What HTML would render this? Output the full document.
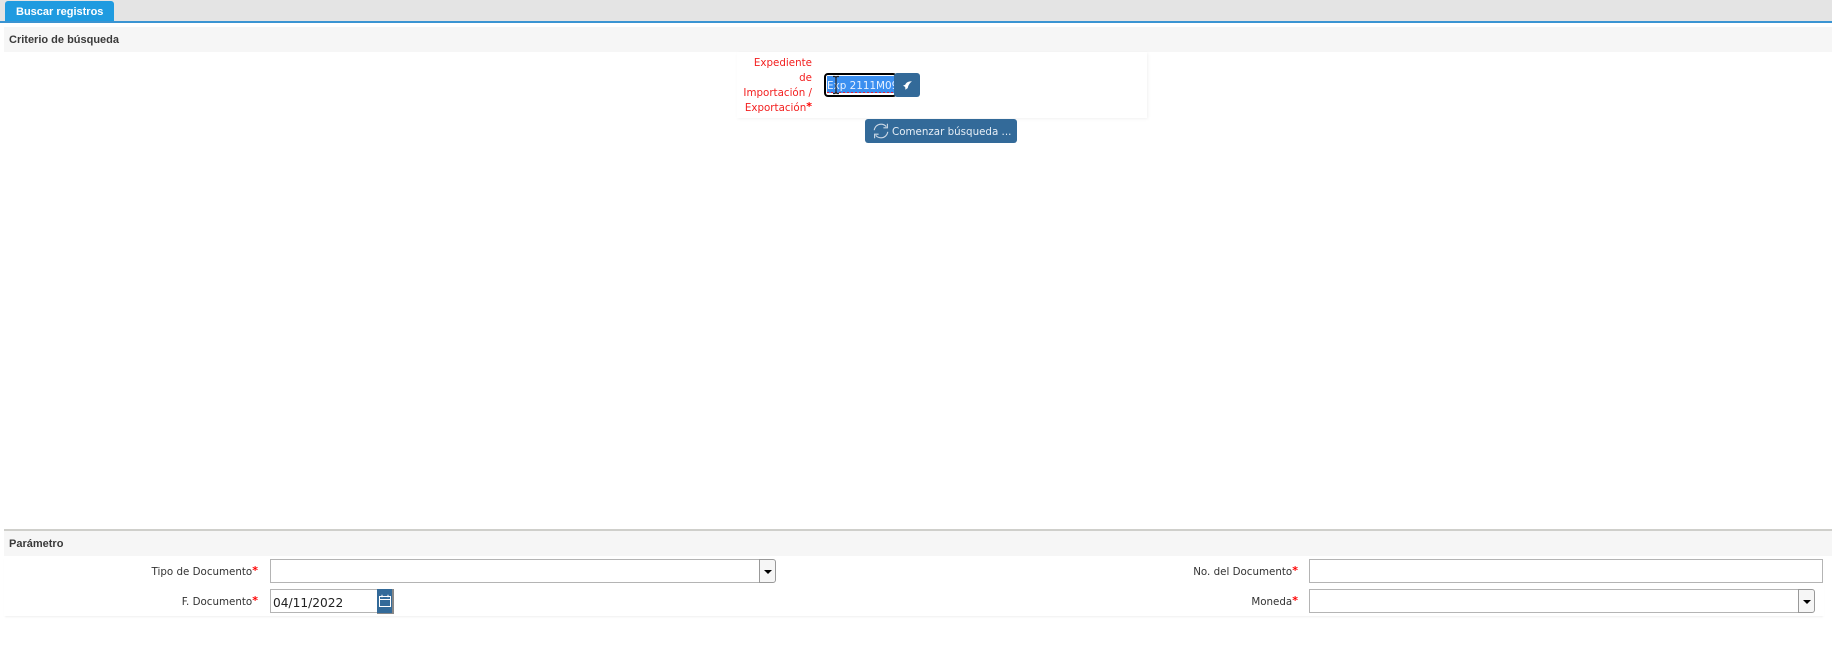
<!DOCTYPE html>
<html><head><meta charset="utf-8"><style>
html,body{margin:0;padding:0;background:#fff;}
body{width:1832px;height:646px;position:relative;overflow:hidden;font-family:"DejaVu Sans",sans-serif;color:#333;}
.a{position:absolute;box-sizing:border-box;}
.h{font-family:"Liberation Sans",sans-serif;font-weight:bold;font-size:11px;color:#3a3a3a;white-space:nowrap;}
.l{font-size:10.3px;text-align:right;white-space:nowrap;line-height:15px;}
.l b{color:#f00;font-weight:bold;font-size:11px;line-height:10px;position:relative;top:-1px;}
.i{border:1px solid #b4b4b4;background:#fff;}
.s{border:1px solid #999;background:#f6f6f6;border-radius:0 3px 3px 0;}
.s:after{content:"";position:absolute;left:4px;top:10px;border:4px solid transparent;border-top:4px solid #000;border-bottom:0;}
</style></head><body>
<div class="a" style="left:0;top:0;width:1832px;height:21px;background:#e4e4e4"></div>
<div class="a" style="left:5px;top:1px;width:109px;height:21px;background:#1f9be0;border-radius:3px 3px 0 0"></div>
<div class="a" style="left:16px;top:4px;font:bold 11px/16px 'Liberation Sans',sans-serif;color:#fff;white-space:nowrap">Buscar registros</div>
<div class="a" style="left:0;top:21px;width:1832px;height:2px;background:#3a94d2"></div>

<div class="a" style="left:4px;top:27px;width:1828px;height:25px;background:#f6f6f6"></div>
<div class="a h" style="left:9px;top:31px;line-height:17px;padding-top:1px">Criterio de búsqueda</div>

<div class="a" style="left:737px;top:52px;width:410px;height:66px;background:#fff;box-shadow:1px 1px 3px rgba(0,0,0,.06)"></div>
<div class="a l" style="left:712px;top:56px;width:100px;color:#f32020">Expediente<br>de<br>Importación /<br>Exportación<b>*</b></div>

<div class="a" style="left:824px;top:73px;width:73px;height:24px;background:#fff;border:2px solid #000;border-radius:4px"></div>
<div class="a" style="left:827px;top:76px;width:67px;height:17px;background:#3b8ff0;overflow:hidden;color:#e8f1ff;font-size:10.4px;line-height:21px;white-space:nowrap">Exp 2111M09</div>
<div class="a" style="left:827px;top:92px;width:67px;height:1px;background:repeating-linear-gradient(90deg,#e0203a 0 2px,transparent 2px 4px)"></div>
<svg class="a" style="left:832px;top:75px" width="8" height="20" viewBox="0 0 8 20"><path d="M1 1.5h2l1 1 1-1h2M4 2.5v15M1 18.5h2l1-1 1 1h2" fill="none" stroke="#222" stroke-width="1.2"/></svg>
<div class="a" style="left:894px;top:73px;width:26px;height:24px;background:#336a99;border-radius:3px"></div>
<svg class="a" style="left:900px;top:78px" width="15" height="14" viewBox="0 0 15 14"><path d="M12 3.4C9 3 6 4.4 5.2 6.8L3 7.6 5.2 9 5.4 11.8 7.8 10C8 7.8 9.6 5 12 3.4Z" fill="#fff"/></svg>

<div class="a" style="left:865px;top:119px;width:152px;height:24px;background:#336a99;border-radius:3px"></div>
<svg class="a" style="left:872px;top:122px" width="18" height="18" viewBox="0 0 18 18"><path d="M2.2 8.2C2.8 4.6 5.6 2.2 9 2.2c2.2 0 4 .9 5.3 2.5M15.8 9.8C15.2 13.4 12.4 15.8 9 15.8c-2.2 0-4-.9-5.3-2.5" fill="none" stroke="#cdd9e6" stroke-width="1.1"/><path d="M15.4 1.8v4h-4M2.6 16.2v-4h4" fill="none" stroke="#cdd9e6" stroke-width="1.1"/></svg>
<div class="a" style="left:892px;top:124px;font-size:10.3px;line-height:16px;color:#e6eef6;white-space:nowrap">Comenzar búsqueda ...</div>

<div class="a" style="left:4px;top:529px;width:1828px;height:2px;background:#cfcfcb"></div>
<div class="a" style="left:4px;top:531px;width:1828px;height:25px;background:#f6f6f6"></div>
<div class="a h" style="left:9px;top:535px;line-height:17px;padding-top:1px">Parámetro</div>
<div class="a" style="left:4px;top:556px;width:1820px;height:60px;background:#fff;box-shadow:0 2px 2px -1px rgba(0,0,0,.07)"></div>

<div class="a l" style="left:100px;top:565px;width:158px">Tipo de Documento<b>*</b></div>
<div class="a i" style="left:270px;top:559px;width:490px;height:24px"></div>
<div class="a s" style="left:759px;top:559px;width:17px;height:24px"></div>

<div class="a l" style="left:100px;top:595px;width:158px">F. Documento<b>*</b></div>
<div class="a i" style="left:270px;top:589px;width:108px;height:24px"></div>
<div class="a" style="left:273px;top:595px;font-size:12.2px;line-height:16px;color:#222;white-space:nowrap">04/11/2022</div>
<div class="a" style="left:377px;top:589px;width:17px;height:25px;background:#336a99;border-right:2px solid #888;border-bottom:1px solid #888"></div>
<svg class="a" style="left:378px;top:594px" width="14" height="14" viewBox="0 0 14 14"><path d="M1.5 2.5h11v10h-11zM1.5 5.5h11M4 .8v2.4M10 .8v2.4" fill="none" stroke="#fff" stroke-width="1"/></svg>

<div class="a l" style="left:1130px;top:565px;width:168px">No. del Documento<b>*</b></div>
<div class="a i" style="left:1309px;top:559px;width:514px;height:24px"></div>

<div class="a l" style="left:1130px;top:595px;width:168px">Moneda<b>*</b></div>
<div class="a i" style="left:1309px;top:589px;width:490px;height:24px"></div>
<div class="a s" style="left:1798px;top:589px;width:17px;height:24px"></div>
</body></html>
